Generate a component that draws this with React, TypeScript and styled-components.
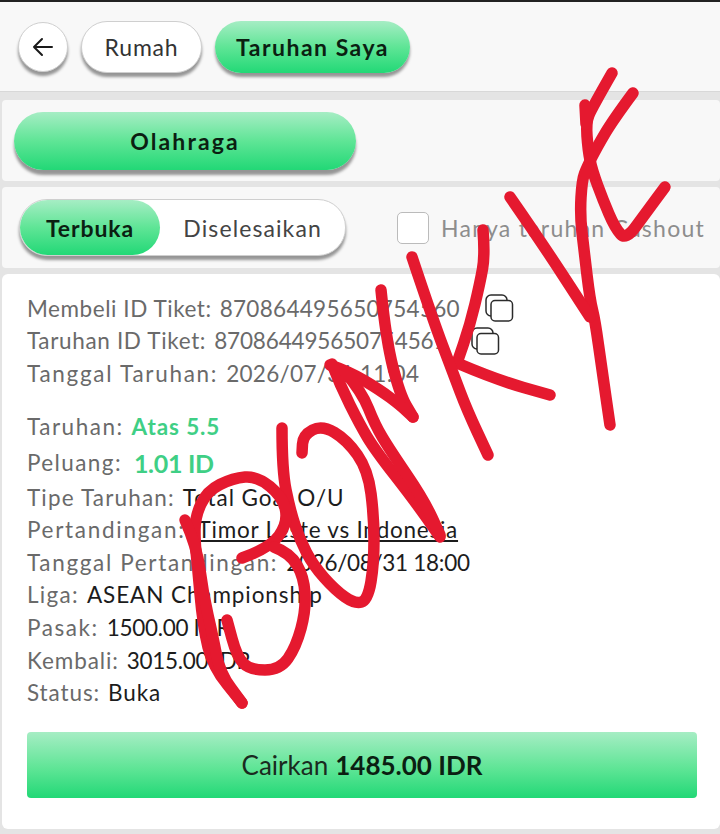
import React from "react";
import styled, { createGlobalStyle } from "styled-components";

const GlobalStyle = createGlobalStyle`
    html, body {
        margin: 0;
        padding: 0;
        background: #e4e4e4;
    }
    body {
        font-family: "Lato", "Open Sans", sans-serif;
    }
`;

const GREEN = "linear-gradient(180deg, #a6edc4 0%, #5fe596 50%, #22d876 100%)";

type Point = [number, number];

// the marker scribble drawn over the ticket, one entry per pen stroke
const STROKES: Point[][] = [
    [[612, 73], [592, 108], [586, 122], [588, 150], [592, 170], [603, 200], [615, 228], [626, 240], [645, 214], [665, 187]],
    [[585, 105], [586, 124]],
    [[633, 93], [613, 120], [597, 147], [587, 167], [582, 180], [580, 215], [584, 250], [590, 300], [595, 320], [602, 370], [610, 425]],
    [[510, 197], [540, 240], [590, 317]],
    [[483, 230], [485, 255], [480, 283], [470, 325], [457, 363]],
    [[457, 363], [497, 380], [550, 395]],
    [[412, 257], [433, 320], [453, 373], [467, 410], [488, 455]],
    [[381, 290], [386, 340], [400, 395], [413, 417]],
    [[330, 365], [350, 372], [380, 390], [400, 405], [413, 417]],
    [[332, 364], [340, 385], [360, 425], [375, 450], [414, 500], [440, 537]],
    [[345, 372], [362, 392], [375, 425], [390, 450], [424, 500], [440, 535]],
    [[282, 428], [282, 470], [290, 510], [300, 540], [313, 565], [335, 590], [355, 604], [368, 600], [374, 563], [374, 517], [368, 470], [347, 440], [322, 425], [303, 435], [302, 453]],
    [[242, 558], [270, 548], [288, 523], [283, 497], [257, 476], [233, 478], [207, 491], [195, 517], [195, 543], [197, 560], [203, 627], [213, 667], [242, 703]],
    [[274, 547], [290, 553], [304, 577], [306, 610], [296, 647], [280, 670], [250, 670], [237, 657], [227, 620]],
    [[185, 520], [197, 547], [203, 593], [213, 637], [220, 673], [242, 703]],
];

const toPath = (points: Point[]) => {
    let d = `M${points[0][0]} ${points[0][1]}`;
    for (let i = 1; i < points.length - 1; i++) {
        const mx = (points[i][0] + points[i + 1][0]) / 2;
        const my = (points[i][1] + points[i + 1][1]) / 2;
        d += ` Q${points[i][0]} ${points[i][1]} ${mx} ${my}`;
    }
    const last = points[points.length - 1];
    return `${d} L${last[0]} ${last[1]}`;
};

export default function App() {
    return (
        <>
            <GlobalStyle />
            <Page>
                <Header>
                    <BackButton>
                        <svg width="24" height="24" viewBox="0 0 24 24" fill="none" stroke="#1a1a1a" strokeWidth="2" strokeLinecap="round" strokeLinejoin="round">
                            <path d="M21 12H3M11 4l-8 8 8 8" />
                        </svg>
                    </BackButton>
                    <PillButton>Rumah</PillButton>
                    <PillButton $active>Taruhan Saya</PillButton>
                </Header>
                <Section>
                    <SportButton>Olahraga</SportButton>
                </Section>
                <FilterSection>
                    <Segmented>
                        <SegmentActive>Terbuka</SegmentActive>
                        <SegmentIdle>Diselesaikan</SegmentIdle>
                    </Segmented>
                    <CheckBox />
                    <CheckLabel>Hanya taruhan Cashout</CheckLabel>
                </FilterSection>
                <Card>
                    <Row>
                        <Label $spacing={0.55}>Membeli ID Tiket:</Label>
                        <TicketNumber $spacing={0.3}>870864495650754560</TicketNumber>
                        <CopyIcon />
                    </Row>
                    <Row>
                        <Label $spacing={0.65}>Taruhan ID Tiket:</Label>
                        <TicketNumber $spacing={-0.15}>870864495650754561</TicketNumber>
                        <CopyIcon />
                    </Row>
                    <Row>
                        <Label $spacing={1.7}>Tanggal Taruhan:</Label>
                        <TicketNumber $spacing={0.3}>2026/07/31 11:04</TicketNumber>
                    </Row>
                    <BetRow>
                        <Label $spacing={1.5}>Taruhan:</Label>
                        <GreenValue>Atas 5.5</GreenValue>
                    </BetRow>
                    <OddsRow>
                        <Label $spacing={1.4}>Peluang:</Label>
                        <OddsValue>1.01 ID</OddsValue>
                    </OddsRow>
                    <Row>
                        <Label $spacing={1.15}>Tipe Taruhan:</Label>
                        <Value>Total Goal O/U</Value>
                    </Row>
                    <Row>
                        <Label $spacing={1.7}>Pertandingan:</Label>
                        <MatchLink>Timor Leste vs Indonesia</MatchLink>
                    </Row>
                    <Row>
                        <Label $spacing={1.65}>Tanggal Pertandingan:</Label>
                        <NumberValue>2026/08/31 18:00</NumberValue>
                    </Row>
                    <Row>
                        <Label $spacing={1.3}>Liga:</Label>
                        <Value>ASEAN Championship</Value>
                    </Row>
                    <Row>
                        <Label $spacing={1.55}>Pasak:</Label>
                        <NumberValue>1500.00 IDR</NumberValue>
                    </Row>
                    <Row>
                        <Label>Kembali:</Label>
                        <NumberValue>3015.00 IDR</NumberValue>
                    </Row>
                    <Row>
                        <Label>Status:</Label>
                        <Value>Buka</Value>
                    </Row>
                    <CashoutButton>
                        Cairkan <strong>1485.00 IDR</strong>
                    </CashoutButton>
                </Card>
                <Scribble viewBox="0 0 720 834" fill="none" stroke="#e5192f" strokeWidth="11.5" strokeLinecap="round" strokeLinejoin="round">
                    {STROKES.map(points => (
                        <path key={points.join()} d={toPath(points)} />
                    ))}
                </Scribble>
            </Page>
        </>
    );
}

const CopyIcon: React.FC = () => (
    <CopySvg width="29" height="28" viewBox="0 0 29 28" fill="none" stroke="#2b2b2b" strokeWidth="1.5">
        <rect x="1" y="1" width="21" height="21" rx="5" />
        <rect x="6" y="6.5" width="21.5" height="20.5" rx="4" fill="#fff" />
    </CopySvg>
);

const Page = styled.div`
    position: relative;
    width: 720px;
    height: 834px;
    overflow: hidden;
    background: #e4e4e4;
    border-top: 2px solid #222;
    box-sizing: border-box;
`;

const Header = styled.div`
    height: 90px;
    display: flex;
    align-items: center;
    gap: 13px;
    padding: 0 18px;
    box-sizing: border-box;
    background: #f8f8f8;
    border-bottom: 1px solid #d8d8d8;
`;

const BackButton = styled.div`
    width: 50px;
    height: 50px;
    border-radius: 50%;
    background: #fff;
    display: flex;
    align-items: center;
    justify-content: center;
    border: 1px solid #cfcfcf;
    box-sizing: border-box;
    box-shadow: 0 4px 3px rgba(0, 0, 0, 0.4);
`;

const PillButton = styled.div<{ $active?: boolean }>`
    height: 52px;
    min-width: ${props => (props.$active ? "195px" : "121px")};
    border-radius: 26px;
    box-sizing: border-box;
    display: flex;
    align-items: center;
    justify-content: center;
    font-size: 23px;
    letter-spacing: ${props => (props.$active ? "1.5px" : "0.8px")};
    font-weight: ${props => (props.$active ? 700 : 400)};
    color: ${props => (props.$active ? "#0b1f12" : "#333")};
    background: ${props => (props.$active ? GREEN : "#fff")};
    border: ${props => (props.$active ? "none" : "1px solid #cfcfcf")};
    box-shadow: 0 4px 3px rgba(0, 0, 0, 0.4);
`;

const Section = styled.div`
    margin: 8px 0 0 2px;
    height: 81px;
    display: flex;
    align-items: center;
    padding: 0 12px;
    box-sizing: border-box;
    background: #f8f8f8;
    border-radius: 4px;
`;

const SportButton = styled.div`
    width: 342px;
    height: 58px;
    border-radius: 29px;
    background: ${GREEN};
    display: flex;
    align-items: center;
    justify-content: center;
    font-size: 23px;
    font-weight: 700;
    letter-spacing: 2.1px;
    color: #0b1f12;
    box-shadow: 0 5px 3px rgba(0, 0, 0, 0.4);
`;

const FilterSection = styled(Section)`
    margin-top: 6px;
    padding: 0 15px 0 17px;
`;

const Segmented = styled.div`
    width: 329px;
    height: 57px;
    display: flex;
    align-items: stretch;
    border-radius: 28px;
    background: #fff;
    border: 1px solid #cfcfcf;
    box-sizing: border-box;
    box-shadow: 0 4px 3px rgba(0, 0, 0, 0.4);
`;

const SegmentActive = styled.div`
    width: 140px;
    border-radius: 28px;
    background: ${GREEN};
    display: flex;
    align-items: center;
    justify-content: center;
    font-size: 23px;
    font-weight: 700;
    letter-spacing: 0.9px;
    color: #0b1f12;
`;

const SegmentIdle = styled.div`
    flex: 1;
    display: flex;
    align-items: center;
    justify-content: center;
    font-size: 23px;
    letter-spacing: 1.1px;
    color: #444;
`;

const CheckBox = styled.div`
    width: 32px;
    height: 32px;
    margin-left: 51px;
    border-radius: 5px;
    border: 1px solid #bbb;
    background: #fff;
    box-sizing: border-box;
`;

const CheckLabel = styled.div`
    margin-left: 12px;
    font-size: 23px;
    letter-spacing: 1.25px;
    color: #8d8d8d;
    white-space: nowrap;
`;

const Card = styled.div`
    margin: 6px 0 0 2px;
    height: 555px;
    padding: 18px 23px 0 25px;
    box-sizing: border-box;
    background: #fff;
    border-radius: 6px;
`;

const Row = styled.div`
    display: flex;
    align-items: center;
    gap: 8px;
    height: 32.6px;
    font-size: 22.5px;
    letter-spacing: 0.9px;
    white-space: nowrap;
`;

const BetRow = styled(Row)`
    margin-top: 19px;
    height: 36px;
`;

const OddsRow = styled(Row)`
    height: 36px;
    gap: 12px;
`;

const Label = styled.span<{ $spacing?: number }>`
    color: #6a6a6a;
    letter-spacing: ${props => props.$spacing ?? 0.9}px;
`;

const TicketNumber = styled.span<{ $spacing: number }>`
    color: #6a6a6a;
    letter-spacing: ${props => props.$spacing}px;
`;

const Value = styled.span`
    color: #1c1c1c;
`;

const NumberValue = styled(Value)`
    letter-spacing: -0.3px;
`;

const MatchLink = styled(Value)`
    text-decoration: underline;
    margin-left: 4px;
    letter-spacing: 0.75px;
`;

const GreenValue = styled.span`
    color: #3fcf85;
    font-weight: 700;
`;

const OddsValue = styled(GreenValue)`
    font-size: 25px;
    letter-spacing: -0.3px;
`;

const CopySvg = styled.svg`
    margin-left: 17px;
    flex: none;
`;

const CashoutButton = styled.div`
    margin-top: 23px;
    height: 66px;
    border-radius: 4px;
    background: linear-gradient(180deg, #a6edc4 0%, #5fe596 55%, #22d876 100%);
    display: flex;
    align-items: center;
    justify-content: center;
    gap: 7px;
    font-size: 26px;
    color: #1a2a20;

    strong {
        font-weight: 700;
        color: #0b1f12;
    }
`;

const Scribble = styled.svg`
    position: absolute;
    left: 0;
    top: -2px;
    width: 720px;
    height: 834px;
    pointer-events: none;
`;
